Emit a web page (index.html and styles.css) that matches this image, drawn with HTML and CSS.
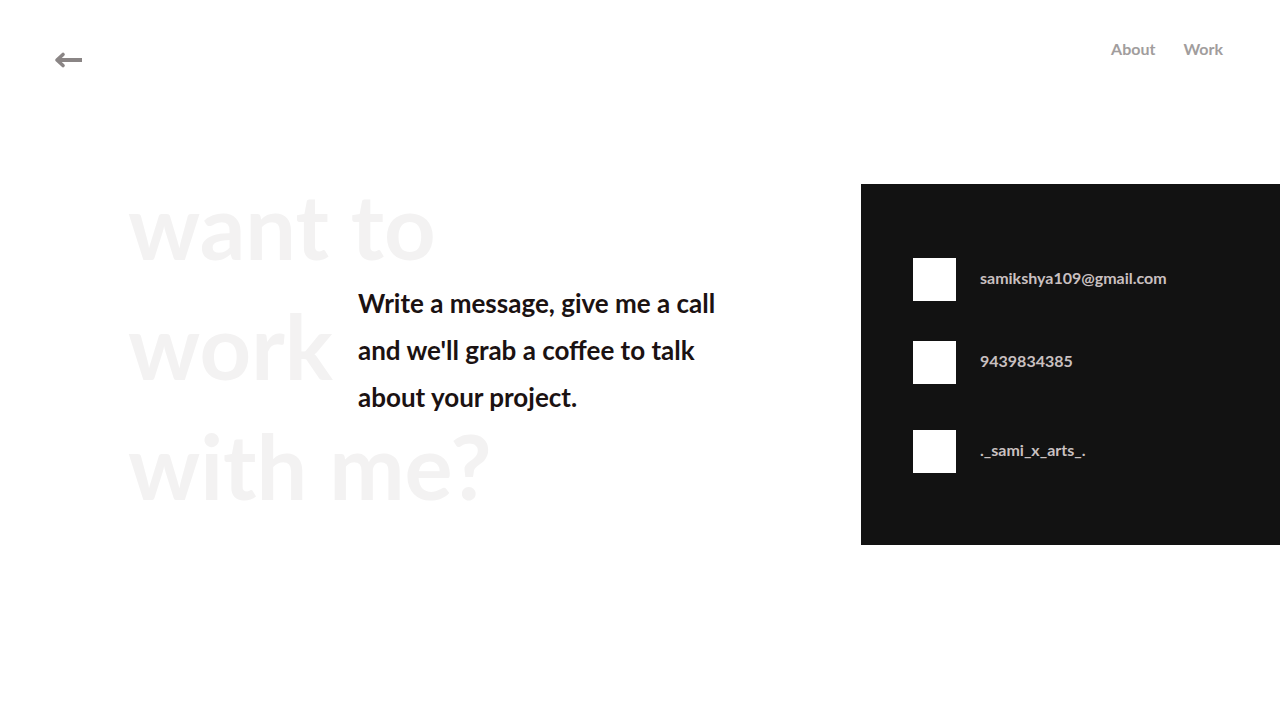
FILE: index.html
```html
<!DOCTYPE html>
<html lang="en">
<head>
<meta charset="utf-8">
<title>Contact</title>
<link rel="stylesheet" href="styles.css">
</head>
<body>
<header class="topbar">
  <a class="back" href="#" aria-label="Back">
    <svg width="28" height="18" viewBox="0 0 28 18"><path d="M9 3.5 L3 9 L9 14.5" fill="none" stroke="#8a8585" stroke-width="3.6" stroke-linecap="round" stroke-linejoin="round"/><rect x="4" y="7" width="24" height="4" fill="#8a8585"/></svg>
  </a>
  <nav class="nav">
    <a href="#">About</a>
    <a href="#">Work</a>
  </nav>
</header>
<main class="main">
  <section class="intro">
    <h1 class="ghost">want to<br>work<br>with me?</h1>
    <p class="lead">Write a message, give me a call<br>and we'll grab a coffee to talk<br>about your project.</p>
  </section>
  <aside class="panel">
    <div class="row"><span class="box"></span><span class="label">samikshya109@gmail.com</span></div>
    <div class="row"><span class="box"></span><span class="label">9439834385</span></div>
    <div class="row"><span class="box"></span><span class="label">._sami_x_arts_.</span></div>
  </aside>
</main>
</body>
</html>
```
FILE: styles.css
```css
html, body { margin: 0; padding: 0; background: #fff; }
body { font-family: Lato, "Open Sans", sans-serif; width: 1280px; height: 717px; overflow: hidden; }
a { text-decoration: none; }
.topbar { display: flex; justify-content: space-between; align-items: flex-start; padding: 39px 57px 0 54px; height: 144px; box-sizing: border-box; }
.back { display: block; margin-top: 12px; line-height: 0; }
.nav { display: flex; gap: 28px; }
.nav a { color: #a19d9d; font-weight: 700; font-size: 16px; line-height: 20px; }
.main { display: flex; justify-content: space-between; align-items: flex-start; }
.intro { display: grid; margin-left: 128px; padding-top: 21px; }
.ghost { grid-area: 1 / 1; margin: 0; font-size: 90px; line-height: 120px; font-weight: 700; color: #f3f2f2; letter-spacing: 0; }
.lead { grid-area: 1 / 1; margin: 115px 0 0 230px; font-size: 26px; line-height: 47px; font-weight: 700; color: #1b1212; }
.panel { margin-top: 40px; width: 419px; height: 361px; background: #121212; box-sizing: border-box; padding: 74px 0 0 52px; display: flex; flex-direction: column; }
.row { display: flex; align-items: center; gap: 24px; height: 43px; }
.row + .row { margin-top: 40px; }
.row:last-child { margin-top: 46px; }
.box { width: 43px; height: 43px; background: #fff; flex: none; }
.label { color: #c9c0c0; font-size: 16px; font-weight: 700; margin-bottom: 4px; }
```
